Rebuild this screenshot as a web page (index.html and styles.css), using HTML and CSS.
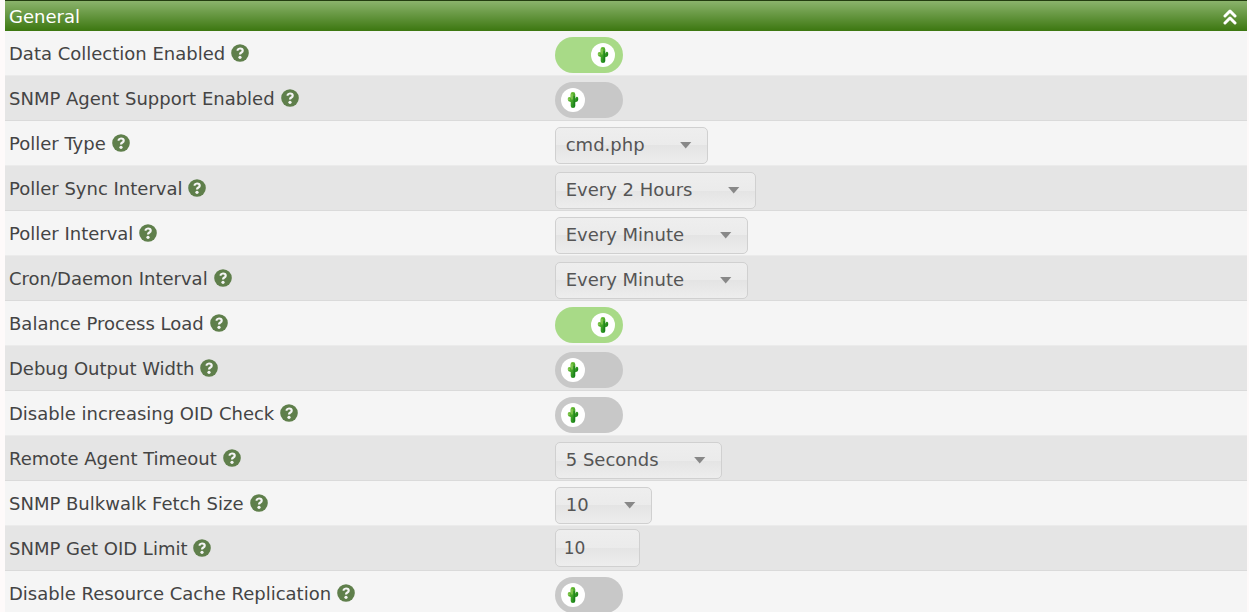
FILE: index.html
```html
<!DOCTYPE html>
<html lang="en">
<head>
<meta charset="utf-8">
<title>Poller Settings</title>
<link rel="stylesheet" href="styles.css">
</head>
<body>
<svg class="sprite" aria-hidden="true">
  <defs>
    <linearGradient id="cactus-fill" x1="0" y1="0" x2="1" y2="1">
      <stop offset="0" stop-color="#8ad03c"/>
      <stop offset="0.45" stop-color="#45a52a"/>
      <stop offset="1" stop-color="#087a14"/>
    </linearGradient>
    <symbol id="help" viewBox="0 0 18 18">
      <circle cx="9" cy="9" r="8.800" fill="currentColor"/>
      <path d="M6.200 6.600C6.800 5.200 7.700 4.500 9 4.500C10.600 4.500 11.700 5.400 11.700 6.700C11.700 8.500 9 8.500 9 10.400" fill="none" stroke="#f5f5f5" stroke-width="2.200"/>
      <circle cx="9" cy="13.300" r="1.600" fill="#f5f5f5"/>
    </symbol>
    <symbol id="cactus" viewBox="0 0 12 16">
      <path fill="url(#cactus-fill)" d="M3.500 2.400Q3.500 0 5.900 0T8.300 2.400V6.200H8.700V5.800Q8.900 4.700 9.900 4.700T11.200 6V8Q11 10 8.300 10.200V14Q8.300 16 6 16T3.700 14V10Q.9 9.600.8 7.800V6.600Q.9 5 2.200 5Q3 5 3.500 5.600Z"/>
      <path d="M5 2.200V7.500M2 6.500V8" stroke="#b0de70" stroke-width=".9" fill="none"/>
      <path d="M7.200 4V14.500M10.200 6.500V8.500" stroke="#0f7418" stroke-width=".8" fill="none"/>
    </symbol>
  </defs>
</svg>
<form class="settings">
  <header class="section">
    <h1 class="title">General</h1>
    <button class="collapse" type="button" aria-label="Collapse section">
      <svg class="chevrons" viewBox="0 0 14 18"><path d="M2 8L7 3L12 8M2 15L7 10L12 15"/></svg>
    </button>
  </header>

  <div class="row">
    <div class="name"><label for="enabled">Data Collection Enabled</label><svg class="help"><use href="#help"/></svg></div>
    <div class="field"><label class="toggle"><input class="switch" type="checkbox" id="enabled" checked><span class="knob"><svg class="cactus"><use href="#cactus"/></svg></span></label></div>
  </div>
  <div class="row">
    <div class="name"><label for="snmp-agent">SNMP Agent Support Enabled</label><svg class="help"><use href="#help"/></svg></div>
    <div class="field"><label class="toggle"><input class="switch" type="checkbox" id="snmp-agent"><span class="knob"><svg class="cactus"><use href="#cactus"/></svg></span></label></div>
  </div>
  <div class="row">
    <div class="name"><label for="poller-type">Poller Type</label><svg class="help"><use href="#help"/></svg></div>
    <div class="field"><span class="dropdown"><select class="select" id="poller-type"><option>cmd.php</option></select></span></div>
  </div>
  <div class="row">
    <div class="name"><label for="sync-interval">Poller Sync Interval</label><svg class="help"><use href="#help"/></svg></div>
    <div class="field"><span class="dropdown"><select class="select" id="sync-interval"><option>Every 2 Hours</option></select></span></div>
  </div>
  <div class="row">
    <div class="name"><label for="poller-interval">Poller Interval</label><svg class="help"><use href="#help"/></svg></div>
    <div class="field"><span class="dropdown"><select class="select" id="poller-interval"><option>Every Minute</option></select></span></div>
  </div>
  <div class="row">
    <div class="name"><label for="cron-interval">Cron/Daemon Interval</label><svg class="help"><use href="#help"/></svg></div>
    <div class="field"><span class="dropdown"><select class="select" id="cron-interval"><option>Every Minute</option></select></span></div>
  </div>
  <div class="row">
    <div class="name"><label for="balance">Balance Process Load</label><svg class="help"><use href="#help"/></svg></div>
    <div class="field"><label class="toggle"><input class="switch" type="checkbox" id="balance" checked><span class="knob"><svg class="cactus"><use href="#cactus"/></svg></span></label></div>
  </div>
  <div class="row">
    <div class="name"><label for="debug-width">Debug Output Width</label><svg class="help"><use href="#help"/></svg></div>
    <div class="field"><label class="toggle"><input class="switch" type="checkbox" id="debug-width"><span class="knob"><svg class="cactus"><use href="#cactus"/></svg></span></label></div>
  </div>
  <div class="row">
    <div class="name"><label for="oid-check">Disable increasing OID Check</label><svg class="help"><use href="#help"/></svg></div>
    <div class="field"><label class="toggle"><input class="switch" type="checkbox" id="oid-check"><span class="knob"><svg class="cactus"><use href="#cactus"/></svg></span></label></div>
  </div>
  <div class="row">
    <div class="name"><label for="agent-timeout">Remote Agent Timeout</label><svg class="help"><use href="#help"/></svg></div>
    <div class="field"><span class="dropdown"><select class="select" id="agent-timeout"><option>5 Seconds</option></select></span></div>
  </div>
  <div class="row">
    <div class="name"><label for="bulkwalk">SNMP Bulkwalk Fetch Size</label><svg class="help"><use href="#help"/></svg></div>
    <div class="field"><span class="dropdown"><select class="select" id="bulkwalk"><option>10</option></select></span></div>
  </div>
  <div class="row">
    <div class="name"><label for="oid-limit">SNMP Get OID Limit</label><svg class="help"><use href="#help"/></svg></div>
    <div class="field field-text"><input class="text" type="text" id="oid-limit" value="10"></div>
  </div>
  <div class="row">
    <div class="name"><label for="cache-replication">Disable Resource Cache Replication</label><svg class="help"><use href="#help"/></svg></div>
    <div class="field"><label class="toggle"><input class="switch" type="checkbox" id="cache-replication"><span class="knob"><svg class="cactus"><use href="#cactus"/></svg></span></label></div>
  </div>
</form>
</body>
</html>
```

FILE: styles.css
```css
* {
  box-sizing: border-box;
}

body {
  margin: 0;
  padding: 0 2px 0 5px;
  background: #fefafa;
  color: #444;
  font: 18px/24px "DejaVu Sans", Verdana, sans-serif;
}

.sprite {
  position: absolute;
  width: 0;
  height: 0;
}

.section {
  display: flex;
  align-items: center;
  justify-content: space-between;
  height: 31px;
  padding: 0 10px 0 4px;
  border-top: 1px solid #233c10;
  background: linear-gradient(#8bb36c, #3c7710);
  color: #fff;
}

.title {
  margin: 0;
  padding-top: 2px;
  font-size: 18px;
  font-weight: normal;
}

.collapse {
  display: flex;
  padding: 2px 0 0;
  border: 0;
  background: none;
  color: inherit;
}

.chevrons {
  width: 14px;
  height: 18px;
  fill: none;
  stroke: currentColor;
  stroke-width: 3;
  stroke-linecap: round;
  stroke-linejoin: round;
}

.row {
  display: grid;
  grid-template-columns: 44% 1fr;
  height: 45px;
  padding-left: 4px;
  border-bottom: 1px solid #dadada;
  background: #f5f5f5;
}

.row:nth-child(odd) {
  background: #e5e5e5;
}

.row:nth-child(even) {
  border-color: #ebebeb;
}

.name {
  display: flex;
  align-items: center;
  gap: 6px;
  padding-top: 2px;
}

.help {
  width: 18px;
  height: 18px;
  margin-bottom: 2px;
  color: #5f7f4b;
}

.field {
  display: flex;
  align-items: flex-start;
  padding: 6px 0 0 1px;
}

.field-text {
  padding-top: 3px;
}

.toggle {
  display: grid;
  width: 68px;
  height: 36px;
}

.switch {
  grid-area: 1 / 1;
  width: 68px;
  height: 36px;
  margin: 0;
  border-radius: 18px;
  background: #c8c8c8;
  appearance: none;
}

.switch:checked {
  background: #a8da87;
}

.knob {
  grid-area: 1 / 1;
  z-index: 1;
  display: flex;
  align-items: center;
  justify-content: center;
  width: 24px;
  height: 24px;
  margin: 6px 8px 6px 6px;
  border-radius: 50%;
  background: #fff;
}

.switch:checked + .knob {
  justify-self: end;
}

.cactus {
  width: 12px;
  height: 16px;
}

.dropdown {
  display: inline-grid;
  align-items: center;
}

.dropdown::after {
  content: "";
  grid-area: 1 / 1;
  justify-self: end;
  width: 12px;
  height: 7px;
  margin: 0 16px 1px 0;
  background: #888;
  clip-path: polygon(0 0, 100% 0, 50% 100%);
  pointer-events: none;
}

.select,
.text {
  border: 1px solid #d0d0d0;
  border-radius: 5px;
  background: linear-gradient(#eee 0%, #ebebeb 50%, #e4e4e4 50%, #ededed 100%);
  color: #555;
  font: inherit;
}

.select {
  grid-area: 1 / 1;
  height: 37px;
  padding: 0 62px 2px 10px;
  appearance: none;
}

.text {
  width: 85px;
  height: 38px;
  padding: 0 8px;
  font-size: 17px;
}
```
